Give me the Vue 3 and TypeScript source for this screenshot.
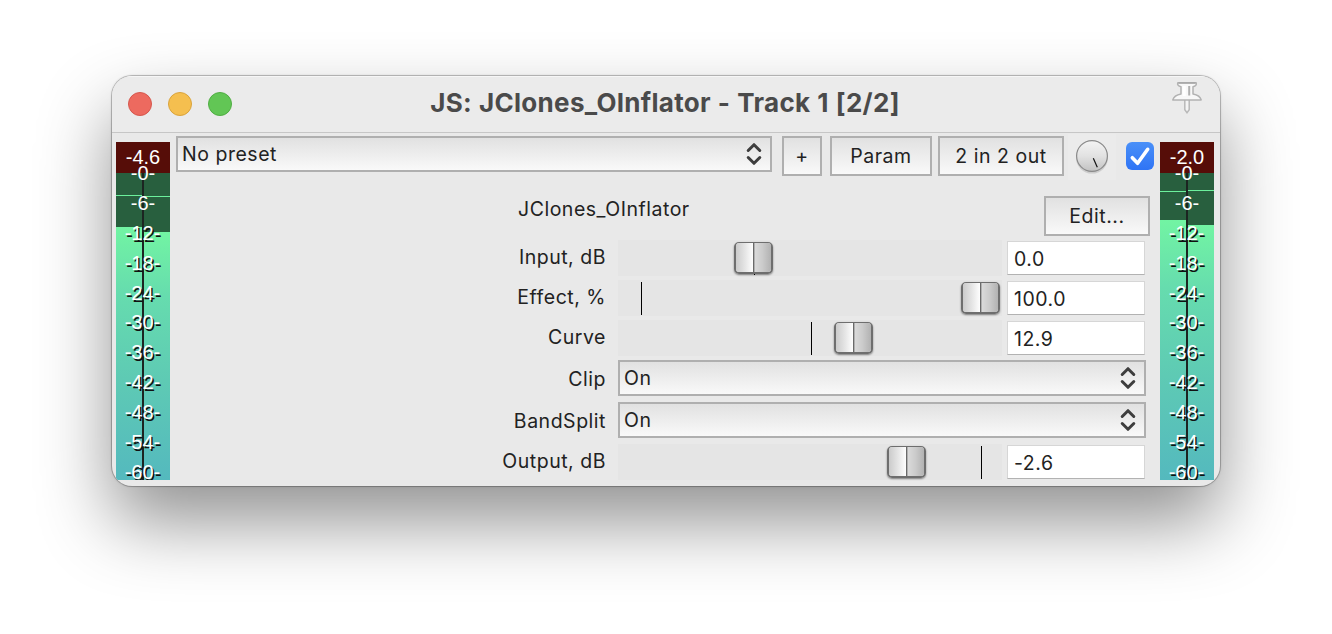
<script setup lang="ts">
interface Channel { headroom: number; hold: number }
interface Meter { name: string; peak: string; channels: Channel[] }
interface Param {
  label: string
  kind: 'slider' | 'choice'
  value: string
  thumb?: number
  tick?: number
}

const meters: Meter[] = [
  { name: 'left', peak: '-4.6', channels: [{ headroom: 54, hold: 22 }, { headroom: 59, hold: 23 }] },
  { name: 'right', peak: '-2.0', channels: [{ headroom: 47, hold: 18 }, { headroom: 52, hold: 17 }] },
]
const marks = [0, 6, 12, 18, 24, 30, 36, 42, 48, 54, 60]

const params: Param[] = [
  { label: 'Input, dB', kind: 'slider', value: '0.0', thumb: 116, tick: 136 },
  { label: 'Effect, %', kind: 'slider', value: '100.0', thumb: 343, tick: 23 },
  { label: 'Curve', kind: 'slider', value: '12.9', thumb: 216, tick: 193 },
  { label: 'Clip', kind: 'choice', value: 'On' },
  { label: 'BandSplit', kind: 'choice', value: 'On' },
  { label: 'Output, dB', kind: 'slider', value: '-2.6', thumb: 269, tick: 363 },
]
</script>

<template>
  <div class="desktop">
    <div class="window">
      <header class="titlebar">
        <div class="lights">
          <span class="light red"></span>
          <span class="light yellow"></span>
          <span class="light green"></span>
        </div>
        <h1>JS: JClones_OInflator - Track 1 [2/2]</h1>
        <svg class="pin" width="34" height="38" viewBox="0 0 34 38">
          <path d="M14.800 21v9.800l2.200 3 2.200-3V21" fill="#f4f4f4" stroke="#b8b8b8" stroke-width="1.500" />
          <path d="M7.800 3.700h18.400c.7 1.900-.6 3.300-3.200 4v7.300c4.600.9 7.400 2.900 8.200 5.900H2.800c.8-3 3.600-5 8.200-5.900V7.700c-2.600-.7-3.900-2.100-3.200-4z" fill="#f8f8f8" stroke="#b2b2b2" stroke-width="1.500" stroke-linejoin="round" />
          <path d="M8.500 4h17" stroke="#a6a6a6" stroke-width="1.500" />
          <path d="M14.200 7v10" stroke="#fff" stroke-width="3" />
          <path d="M19.200 7v9.500" stroke="#b0b0b0" stroke-width="2" />
        </svg>
      </header>

      <div class="body">
        <div v-for="m in meters" :key="m.name" class="meter" :class="m.name">
          <div class="peak">{{ m.peak }}</div>
          <div class="channels">
            <div v-for="(c, i) in m.channels" :key="i" class="channel">
              <div class="headroom" :style="{ height: c.headroom + 'px' }">
                <span class="hold" :style="{ marginTop: c.hold + 'px' }"></span>
              </div>
              <div class="level"></div>
            </div>
            <span class="spine"></span>
          </div>
          <div class="scale">
            <span v-for="mark in marks" :key="mark" :class="{ plain: mark < 12 }">-{{ mark }}-</span>
          </div>
        </div>

        <main class="panel">
          <div class="toolbar">
            <div class="select preset">
              <span>No preset</span>
              <svg class="chev" width="16" height="24" viewBox="0 0 16 24"><path d="M2.200 8.500 8 2.700l5.800 5.800M2.200 15.500 8 21.300l5.800-5.800" /></svg>
            </div>
            <button class="btn add">+</button>
            <button class="btn param">Param</button>
            <button class="btn io">2 in 2 out</button>
            <div class="knob">
              <svg width="48" height="46" viewBox="0 0 48 46">
                <defs>
                  <linearGradient id="dial" x1="0" y1="0" x2="0" y2="1">
                    <stop offset="0" stop-color="#f4f4f4" />
                    <stop offset=".5" stop-color="#e2e2e2" />
                    <stop offset="1" stop-color="#c2c2c2" />
                  </linearGradient>
                </defs>
                <circle cx="24" cy="23.600" r="16" fill="#b9b9b9" opacity=".6" />
                <circle cx="24" cy="22" r="15.400" fill="url(#dial)" stroke="#8a8a8a" stroke-width="1.200" />
                <path d="M25.300 24.300 29.300 33.300" stroke="#111" stroke-width="1.200" />
              </svg>
            </div>
            <div class="check">
              <svg width="28" height="28" viewBox="0 0 28 28"><path d="M6.300 15.700 11.600 21.300 21.700 7.300" /></svg>
            </div>
          </div>

          <div class="heading">
            <span class="name">JClones_OInflator</span>
            <button class="btn edit">Edit...</button>
          </div>

          <div class="params">
            <div v-for="p in params" :key="p.label" class="row" :class="p.kind">
              <label>{{ p.label }}</label>
              <template v-if="p.kind === 'slider'">
                <div class="track">
                  <span class="tick" :style="{ left: p.tick + 'px' }"></span>
                  <span class="thumb" :style="{ left: p.thumb + 'px' }"><i></i><i></i></span>
                </div>
                <div class="field">{{ p.value }}</div>
              </template>
              <div v-else class="select">
                <span>{{ p.value }}</span>
                <svg class="chev" width="16" height="24" viewBox="0 0 16 24"><path d="M2.200 8.500 8 2.700l5.800 5.800M2.200 15.500 8 21.300l5.800-5.800" /></svg>
              </div>
            </div>
          </div>
        </main>
      </div>
    </div>
  </div>
</template>

<style>
body {
  background: #fff;
  overflow: hidden;
}
</style>

<style scoped>
* {
  box-sizing: border-box;
}
.desktop {
  width: 1332px;
  height: 634px;
  padding: 76px 112px 0;
  font-family: Inter, "Liberation Sans", sans-serif;
  font-size: 19.5px;
  letter-spacing: 0.52px;
  color: #222;
}
.window {
  width: 1108px;
  height: 410px;
  border-radius: 20px;
  background: #e9e9e9;
  overflow: hidden;
  box-shadow: 0 0 0 1px rgba(0, 0, 0, 0.2), 0 0 3px rgba(0, 0, 0, 0.2), 0 36px 72px rgba(0, 0, 0, 0.43);
}
.titlebar {
  height: 57px;
  display: grid;
  grid-template-columns: 120px 1fr 120px;
  align-items: start;
  background: #ebebeb;
  border-top: 1px solid #f6f6f6;
  border-bottom: 1px solid #c6c6c6;
}
.lights {
  display: flex;
  gap: 16px;
  padding: 15px 0 0 16px;
}
.light {
  width: 24px;
  height: 24px;
  flex: none;
  border-radius: 50%;
  border: 1px solid;
}
.red { background: #ed6a5f; border-color: #d5574d; }
.yellow { background: #f5bf4f; border-color: #d9a33c; }
.green { background: #62c655; border-color: #50ad43; }
h1 {
  margin: 0;
  padding-right: 2px;
  text-align: center;
  font-size: 26px;
  line-height: 52px;
  font-weight: 700;
  letter-spacing: 0.3px;
  word-spacing: 0.5px;
  color: #4a4a4a;
  white-space: nowrap;
}
.pin {
  justify-self: end;
  margin: 2px 16px 0 0;
}
.body {
  display: flex;
  height: 353px;
  padding: 9px 6px 6px 4px;
}
.meter {
  position: relative;
  width: 54px;
  height: 338px;
  flex: none;
  overflow: hidden;
  color: #fff;
  font: 20px/30px "Liberation Sans", Arial, sans-serif;
  letter-spacing: 0;
  text-align: center;
}
.meter.right { order: 3; }
.peak {
  height: 31px;
  background: #560d08;
}
.channels {
  position: relative;
  display: flex;
  height: 307px;
}
.channel {
  width: 26px;
  display: flex;
  flex-direction: column;
}
.channel + .channel { width: 28px; }
.headroom {
  flex: none;
  display: flex;
  align-items: flex-start;
  background: #285f3e;
}
.hold {
  width: 100%;
  height: 1px;
  background: #6cf09c;
}
.level {
  flex: 1;
  background: linear-gradient(#72f4a3, #66dcae 26%, #5ecab4 60%, #54b9be);
}
.spine {
  position: absolute;
  left: 26px;
  top: 0;
  width: 2px;
  height: 307px;
  background: #1c2421;
}
.scale {
  position: absolute;
  left: 0;
  right: 1px;
  top: 16px;
  display: flex;
  flex-direction: column;
}
.scale span {
  height: 29.9px;
  text-shadow: 1.5px 1.5px 0 #111;
}
.scale .plain {
  padding-left: 1px;
  text-shadow: none;
}
.panel {
  width: 990px;
  flex: none;
  margin-top: -7px;
}
.toolbar {
  display: flex;
  align-items: flex-start;
  height: 46px;
  padding: 0 0 0 6px;
}
.select {
  display: flex;
  align-items: center;
  justify-content: space-between;
  height: 36px;
  padding: 0 8px 0 4px;
  border: 2px solid #afafaf;
  background: linear-gradient(#e1e1e1, #f9f9f9);
}
.select span {
  line-height: 32px;
  margin-top: -1px;
}
.chev {
  fill: none;
  stroke: #3e3e3e;
  stroke-width: 3;
  stroke-linecap: round;
  stroke-linejoin: round;
}
.preset { width: 596px; margin-top: 1px; }
.btn {
  height: 40px;
  margin: 1px 0 0;
  padding: 0;
  border: 2px solid #afafaf;
  border-radius: 0;
  background: linear-gradient(#e1e1e1, #f9f9f9);
  font: inherit;
  letter-spacing: inherit;
  color: inherit;
  line-height: 36px;
}
.add { width: 40px; margin-left: 10px; }
.param { width: 102px; margin-left: 8px; }
.io { width: 126px; margin-left: 6px; }
.knob {
  width: 48px;
  height: 46px;
  margin: -1px 0 0 4px;
  background: #ebebeb;
}
.check {
  width: 28px;
  height: 28px;
  margin: 7px 0 0 10px;
  border-radius: 6px;
  background: linear-gradient(#4a90f8, #2f74f5);
}
.check path {
  fill: none;
  stroke: #fff;
  stroke-width: 3.6;
  stroke-linecap: round;
  stroke-linejoin: round;
}
.heading {
  display: flex;
  justify-content: space-between;
  height: 59px;
  padding: 14px 10px 0 348px;
}
.name { line-height: 28px; }
.edit { width: 106px; margin-top: 1px; }
.params { display: flex; flex-direction: column; }
.row {
  display: flex;
  height: 40px;
}
.row.choice { height: 42px; }
.row label {
  width: 436px;
  margin-right: 12px;
  text-align: right;
  line-height: 35px;
}
.row.choice label { line-height: 38px; }
.row .select { width: 528px; }
.track {
  position: relative;
  width: 384px;
  height: 36px;
  background: #e5e5e5;
}
.tick {
  position: absolute;
  top: 2px;
  width: 1px;
  height: 33px;
  background: #000;
}
.thumb {
  position: absolute;
  top: 2px;
  width: 39px;
  height: 32px;
  display: flex;
  border: 1px solid #6e6e6e;
  border-width: 1px 2px 2px;
  border-radius: 5px;
  box-shadow: 0 1px 2px rgba(0, 0, 0, 0.45);
}
.thumb i {
  flex: 1;
  border-radius: 3px 0 0 3px;
  background: linear-gradient(90deg, #cbcbcb, #e6e6e6 55%, #fefefe);
}
.thumb i + i {
  border-left: 1px solid #6a6a6a;
  border-radius: 0 3px 3px 0;
  background: linear-gradient(90deg, #b0b0b0 1px, #dadada 1px, #cbcbcb 50%, #b2b2b2);
}
.field {
  width: 138px;
  height: 34px;
  margin: 1px 0 0 5px;
  padding-left: 6px;
  border: 1px solid #d6d6d6;
  border-bottom-color: #b2b2b2;
  background: #fff;
  line-height: 34px;
}
</style>
